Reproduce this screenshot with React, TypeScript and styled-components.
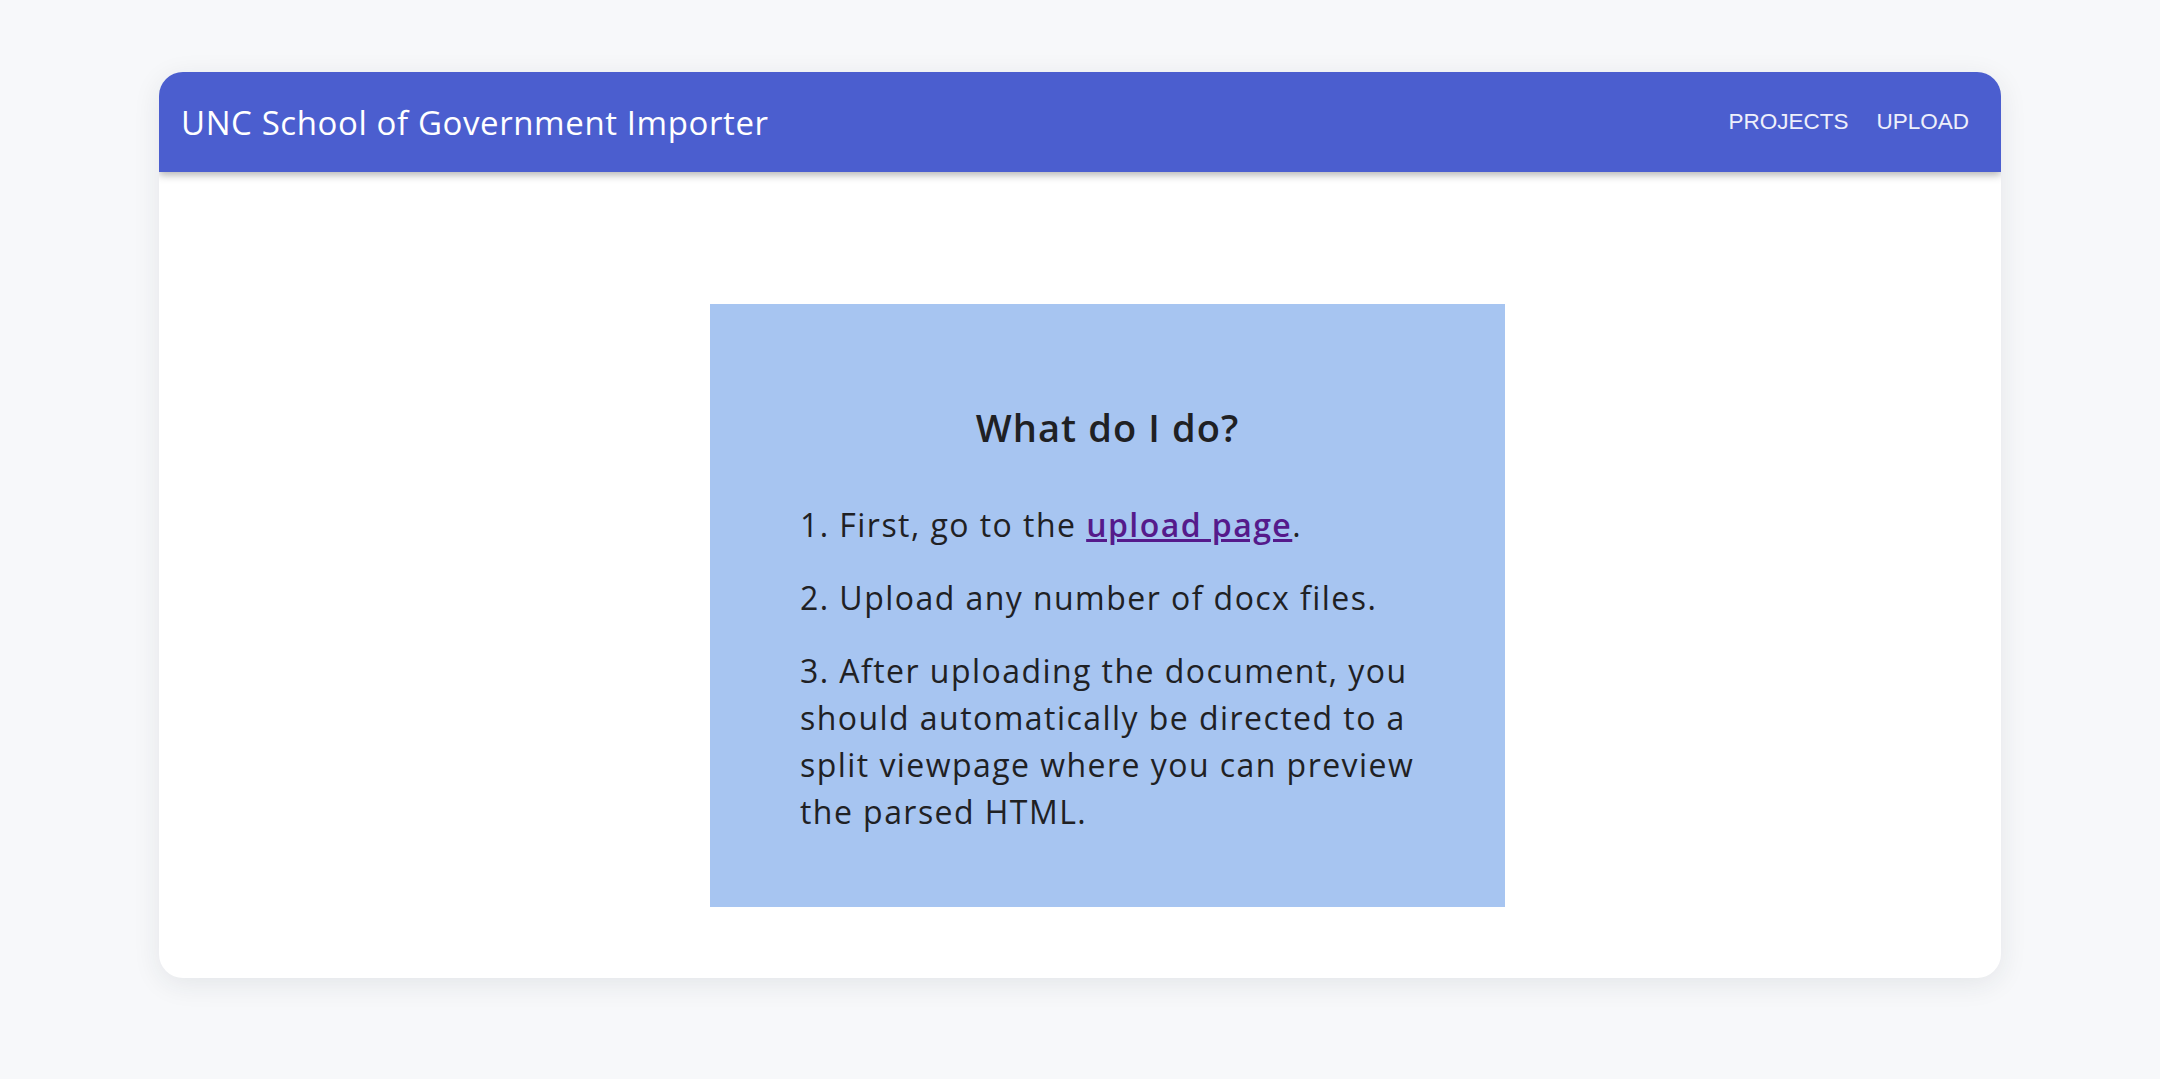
import React from 'react'
import styled, { createGlobalStyle } from 'styled-components'

const GlobalStyle = createGlobalStyle`
  html, body {
    margin: 0;
    padding: 0;
    background: #f7f8fa;
  }
  body {
    font-family: 'Open Sans', 'Liberation Sans', sans-serif;
  }
`

export default function App() {
  return (
    <>
      <GlobalStyle />
      <Page>
        <Card>
          <Header>
            <Title>UNC School of Government Importer</Title>
            <Nav>
              <NavLink href='#projects'>PROJECTS</NavLink>
              <NavLink href='#upload'>UPLOAD</NavLink>
            </Nav>
          </Header>
          <Main>
            <InfoBox>
              <Heading>What do I do?</Heading>
              <Step>
                1. First, go to the <UploadLink href='#upload'>upload page</UploadLink>.
              </Step>
              <Step>2. Upload any number of docx files.</Step>
              <Step>
                3. After uploading the document, you should automatically be directed to a
                split viewpage where you can preview the parsed HTML.
              </Step>
            </InfoBox>
          </Main>
        </Card>
      </Page>
    </>
  )
}

const Page = styled.div`
  min-height: 100vh;
  padding-top: 72px;
  box-sizing: border-box;
`

const Card = styled.div`
  width: 1842px;
  height: 906px;
  margin: 0 auto;
  background: #fff;
  border-radius: 24px;
  overflow: hidden;
  box-shadow: 0 6px 28px rgba(30, 40, 60, 0.09);
  display: flex;
  flex-direction: column;
`

const Header = styled.header`
  position: relative;
  z-index: 1;
  height: 100px;
  flex-shrink: 0;
  display: flex;
  align-items: center;
  justify-content: space-between;
  padding: 0 32px 0 22px;
  background: #4b5ecf;
  box-shadow: 0 3px 8px rgba(0, 0, 0, 0.3);
`

const Title = styled.div`
  color: #fff;
  font-size: 33px;
  font-weight: 400;
  letter-spacing: 0.6px;
`

const Nav = styled.nav`
  display: flex;
  align-items: center;
  gap: 28px;
`

const NavLink = styled.a`
  color: #eef0fb;
  text-decoration: none;
  font-family: 'Liberation Sans', Arial, sans-serif;
  font-size: 22.5px;
  line-height: 1;
`

const Main = styled.main`
  flex: 1;
  display: flex;
  justify-content: center;
  align-items: flex-start;
  padding: 132px 0 0 55px;
`

const InfoBox = styled.section`
  width: 795px;
  height: 603px;
  box-sizing: border-box;
  padding: 100px 70px 0 90px;
  background: #a7c5f1;
  color: #1f2124;
`

const Heading = styled.h2`
  margin: 0 0 51px -20px;
  text-align: center;
  font-size: 38px;
  line-height: 46px;
  font-weight: 600;
  letter-spacing: 1.1px;
`

const Step = styled.p`
  margin: 0 0 26px;
  font-size: 32px;
  line-height: 47px;
  letter-spacing: 1.45px;
`

const UploadLink = styled.a`
  color: #551a8b;
  font-weight: 600;
  text-decoration: underline;
`
